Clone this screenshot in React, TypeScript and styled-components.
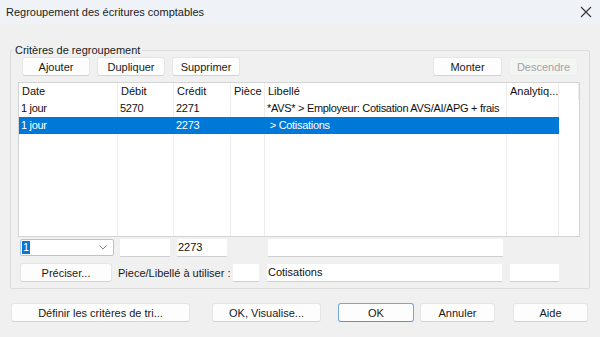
import React from 'react';
import styled, { createGlobalStyle } from 'styled-components';

const GlobalStyle = createGlobalStyle`
  html, body {
    margin: 0;
    padding: 0;
    background: #f0f0f0;
  }
  * { box-sizing: border-box; }
`;

type Row = {
  date: string,
  debit: string,
  credit: string,
  piece: string,
  libelle: string,
  analytique: string,
  selected?: boolean,
}

const rows: Row[] = [
  { date: '1 jour', debit: '5270', credit: '2271', piece: '', libelle: '*AVS* > Employeur: Cotisation AVS/AI/APG + frais', analytique: '' },
  { date: '1 jour', debit: '', credit: '2273', piece: '', libelle: ' > Cotisations', analytique: '', selected: true },
];

const headers = ['Date', 'Débit', 'Crédit', 'Pièce', 'Libellé', 'Analytiq...', ''];

export default function App() {
  return (
    <>
      <GlobalStyle />
      <Window>
        <TitleBar>
          <Title>Regroupement des écritures comptables</Title>
          <CloseIcon width="12" height="12" viewBox="0 0 12 12">
            <path d="M1 1 L11 11 M11 1 L1 11" stroke="#333" strokeWidth="1.1" fill="none" />
          </CloseIcon>
        </TitleBar>

        <Group>
          <Legend>Critères de regroupement</Legend>
          <ToolRow>
            <Button $w={68}>Ajouter</Button>
            <Button $w={68}>Dupliquer</Button>
            <Button $w={68}>Supprimer</Button>
            <Spacer />
            <Button $w={69}>Monter</Button>
            <Button $w={69} disabled>Descendre</Button>
          </ToolRow>

          <Table>
            {headers.map((h, i) => (
              <HeadCell key={'h' + i}>{h}</HeadCell>
            ))}
            {rows.map((r, ri) => (
              <React.Fragment key={ri}>
                <Cell $sel={r.selected}>{r.date}</Cell>
                <Cell $sel={r.selected}>{r.debit}</Cell>
                <Cell $sel={r.selected}>{r.credit}</Cell>
                <Cell $sel={r.selected}>{r.piece}</Cell>
                <Cell $sel={r.selected}>{r.libelle}</Cell>
                <Cell $sel={r.selected}>{r.analytique}</Cell>
                <Cell />
              </React.Fragment>
            ))}
            {headers.map((_, i) => (
              <Cell key={'f' + i} />
            ))}
          </Table>

          <EditRow>
            <Combo>
              <ComboValue>1</ComboValue>
              <svg width="8" height="5" viewBox="0 0 8 5">
                <path d="M0.5 0.5 L4 4 L7.5 0.5" stroke="#8a8a8a" strokeWidth="1" fill="none" />
              </svg>
            </Combo>
            <Field $w={52} $ml={5}></Field>
            <Field $w={52} $ml={5}>2273</Field>
            <Field $w={237} $ml={39}></Field>
          </EditRow>

          <EditRow $mt={6}>
            <Button $w={92} $ml={2}>Préciser...</Button>
            <Label>Piece/Libellé à utiliser :</Label>
            <Field $w={28} $ml={0}></Field>
            <Field $w={237} $ml={6}>Cotisations</Field>
            <Field $w={51} $ml={6}></Field>
          </EditRow>
        </Group>

        <Footer>
          <Button $w={179} $ml={11}>Définir les critères de tri...</Button>
          <Button $w={109} $ml={22}>OK, Visualise...</Button>
          <Button $w={76} $ml={17} $default>OK</Button>
          <Button $w={75} $ml={6}>Annuler</Button>
          <Button $w={75} $ml={18}>Aide</Button>
        </Footer>
      </Window>
    </>
  );
}

const Window = styled.div`
  width: 600px;
  height: 337px;
  background: #f0f0f0;
  font-family: "Liberation Sans", Arial, sans-serif;
  font-size: 11px;
  color: #1a1a1a;
  overflow: hidden;
`;

const TitleBar = styled.div`
  height: 24px;
  background: #eff3f8;
  display: flex;
  align-items: center;
  justify-content: space-between;
  padding: 0 8px 0 6px;
`;

const Title = styled.div`
  font-size: 11px;
  color: #1b1b1b;
`;

const CloseIcon = styled.svg`
  display: block;
`;

const Group = styled.fieldset`
  margin: 19px 0 0 10px;
  width: 580px;
  height: 246px;
  border: 1px solid #dcdcdc;
  border-radius: 2px;
  padding: 0 7px;
`;

const Legend = styled.legend`
  margin-left: -5px;
  padding: 0 2px;
  line-height: 14px;
  color: #1a1a1a;
`;

const ToolRow = styled.div`
  display: flex;
  gap: 7px;
  padding-left: 4px;
  width: 560px;
  margin-bottom: 6px;
`;

const Spacer = styled.div`
  flex: 1;
`;

const Button = styled.button<{ $w: number, $ml?: number, $default?: boolean }>`
  width: ${p => p.$w}px;
  height: 19px;
  margin-left: ${p => p.$ml ?? 0}px;
  padding: 0;
  background: #fdfdfd;
  border: 1px solid ${p => (p.$default ? '#73a7dc' : '#e5e5e5')};
  border-bottom-color: ${p => (p.$default ? '#5b94cf' : '#d2d2d2')};
  border-radius: 3px;
  font-family: "Liberation Sans", Arial, sans-serif;
  font-size: 11px;
  color: #1a1a1a;
  flex-shrink: 0;

  &:disabled {
    background: #f3f5f3;
    border-color: #ececec;
    color: #a3a3a3;
  }
`;

const Table = styled.div`
  width: 562px;
  height: 155px;
  background: #fff;
  border: 1px solid #d4d4d4;
  display: grid;
  grid-template-columns: 99px 56px 57px 34px 242px 52px 1fr;
  grid-template-rows: 17px 17px 17px 1fr;
`;

const HeadCell = styled.div`
  border-right: 1px solid #ececec;
  padding: 1px 0 0 3px;
  line-height: 15px;
  white-space: nowrap;
  overflow: hidden;
  color: #111;
  &:last-child { border-right: none; }
`;

const Cell = styled.div<{ $sel?: boolean }>`
  border-right: 1px solid ${p => (p.$sel ? '#0078d7' : '#ececec')};
  padding: 1px 0 0 2px;
  line-height: 15px;
  letter-spacing: -0.3px;
  white-space: pre;
  overflow: hidden;
  background: ${p => (p.$sel ? '#0078d7' : 'transparent')};
  color: ${p => (p.$sel ? '#fff' : '#111')};
  &:nth-child(7n) { border-right: none; }
`;

const EditRow = styled.div<{ $mt?: number }>`
  display: flex;
  align-items: center;
  margin-top: ${p => p.$mt ?? 1}px;
`;

const Combo = styled.div`
  width: 94px;
  height: 17px;
  margin-left: 2px;
  background: #fff;
  border: 1px solid #a9c6e6;
  border-radius: 2px;
  display: flex;
  align-items: center;
  justify-content: space-between;
  padding: 0 6px 0 1px;
`;

const ComboValue = styled.span`
  background: #0078d7;
  color: #fff;
  line-height: 13px;
  padding: 0 1px;
`;

const Field = styled.div<{ $w: number, $ml: number }>`
  width: ${p => p.$w}px;
  height: 19px;
  margin-left: ${p => p.$ml}px;
  background: #fff;
  border: 1px solid #f0f0f0;
  border-bottom-color: #cfcfcf;
  border-radius: 2px;
  padding: 1px 0 0 1px;
  line-height: 15px;
  color: #111;
  flex-shrink: 0;
`;

const Label = styled.span`
  margin-left: 6px;
  width: 114px;
  white-space: nowrap;
  color: #1a1a1a;
`;

const Footer = styled.div`
  display: flex;
  margin-top: 14px;
`;
